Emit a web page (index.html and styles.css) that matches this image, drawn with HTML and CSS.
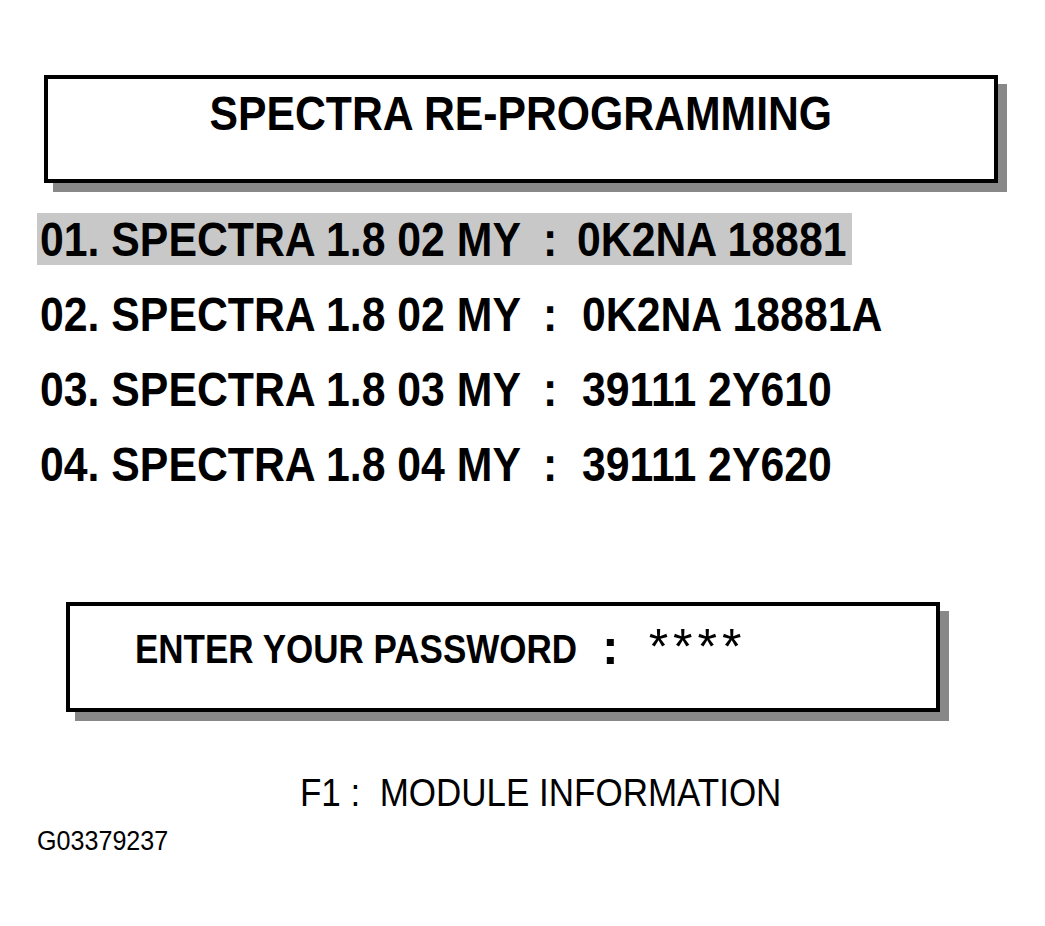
FILE: index.html
```html
<!DOCTYPE html>
<html>
<head>
<meta charset="utf-8">
<link rel="stylesheet" href="styles.css">
</head>
<body>
<div class="page">
  <div class="box title-box">
    <span class="sx title">SPECTRA RE-PROGRAMMING</span>
  </div>

  <div class="rows">
    <div class="row selected">
      <span class="sx label">01. SPECTRA 1.8 02 MY</span>
      <span class="sx colon">:</span>
      <span class="sx value v1">0K2NA 18881</span>
    </div>
    <div class="row">
      <span class="sx label">02. SPECTRA 1.8 02 MY</span>
      <span class="sx colon">:</span>
      <span class="sx value">0K2NA 18881A</span>
    </div>
    <div class="row">
      <span class="sx label">03. SPECTRA 1.8 03 MY</span>
      <span class="sx colon">:</span>
      <span class="sx value">39111 2Y610</span>
    </div>
    <div class="row">
      <span class="sx label">04. SPECTRA 1.8 04 MY</span>
      <span class="sx colon">:</span>
      <span class="sx value">39111 2Y620</span>
    </div>
  </div>

  <div class="box pw-box">
    <span class="sx pw-label">ENTER YOUR PASSWORD</span>
    <span class="pw-colon">:</span>
    <span class="pw-stars">****</span>
  </div>

  <div class="f1"><span class="sx f1-text">F1 :&nbsp; MODULE INFORMATION</span></div>
  <div class="code"><span class="sx code-text">G03379237</span></div>
</div>
</body>
</html>
```

FILE: styles.css
```css
html, body {
  margin: 0;
  padding: 0;
  background: #ffffff;
}

body {
  width: 1045px;
  height: 926px;
  overflow: hidden;
  font-family: "Liberation Sans", Arial, sans-serif;
  color: #000;
}

.page {
  display: flex;
  flex-direction: column;
  padding-top: 75px;
}

.sx {
  display: inline-block;
  white-space: nowrap;
  transform: scaleX(0.875);
  transform-origin: left center;
}

.box {
  box-sizing: border-box;
  border: 4px solid #000;
  background: #fff;
  box-shadow: 9px 9px 0 #888888;
}

.title-box {
  margin-left: 44px;
  width: 954px;
  height: 108px;
  padding-top: 7px;
  text-align: center;
}

.title {
  font-weight: bold;
  font-size: 48px;
  line-height: 56px;
  transform: scaleX(0.89);
  transform-origin: center center;
}

.rows {
  margin-top: 30px;
  display: flex;
  flex-direction: column;
  gap: 23px;
}

.row {
  display: grid;
  grid-template-columns: 503px 34px auto;
  height: 52px;
  margin-left: 37px;
  padding-left: 3px;
  width: 815px;
  font-weight: bold;
  font-size: 48px;
  line-height: 54px;
  box-sizing: border-box;
}

.row .sx {
  transform: scaleX(0.891);
}

.row.selected {
  background: #c8c8c8;
}

.value {
  margin-left: 5px;
}

.value.v1 {
  margin-left: 0;
}

.pw-box {
  margin-top: 112px;
  margin-left: 66px;
  width: 874px;
  height: 110px;
  padding-left: 65px;
  padding-top: 20px;
  display: flex;
  align-items: flex-start;
}

.pw-label {
  font-weight: bold;
  font-size: 40px;
  line-height: 46px;
  width: 467px;
}

.pw-colon {
  font-weight: bold;
  font-size: 50px;
  line-height: 46px;
  margin-top: -2px;
}

.pw-stars {
  margin-left: 30px;
  font-size: 50px;
  line-height: 46px;
  letter-spacing: 5px;
  margin-top: -2px;
}

.f1 {
  margin-top: 58px;
  margin-left: 300px;
  font-size: 39px;
  line-height: 45px;
}

.f1-text {
  transform: scaleX(0.897);
}

.code {
  margin-top: 11px;
  margin-left: 37px;
  font-size: 27px;
  line-height: 30px;
}

.code-text {
  transform: scaleX(0.93);
}
```
